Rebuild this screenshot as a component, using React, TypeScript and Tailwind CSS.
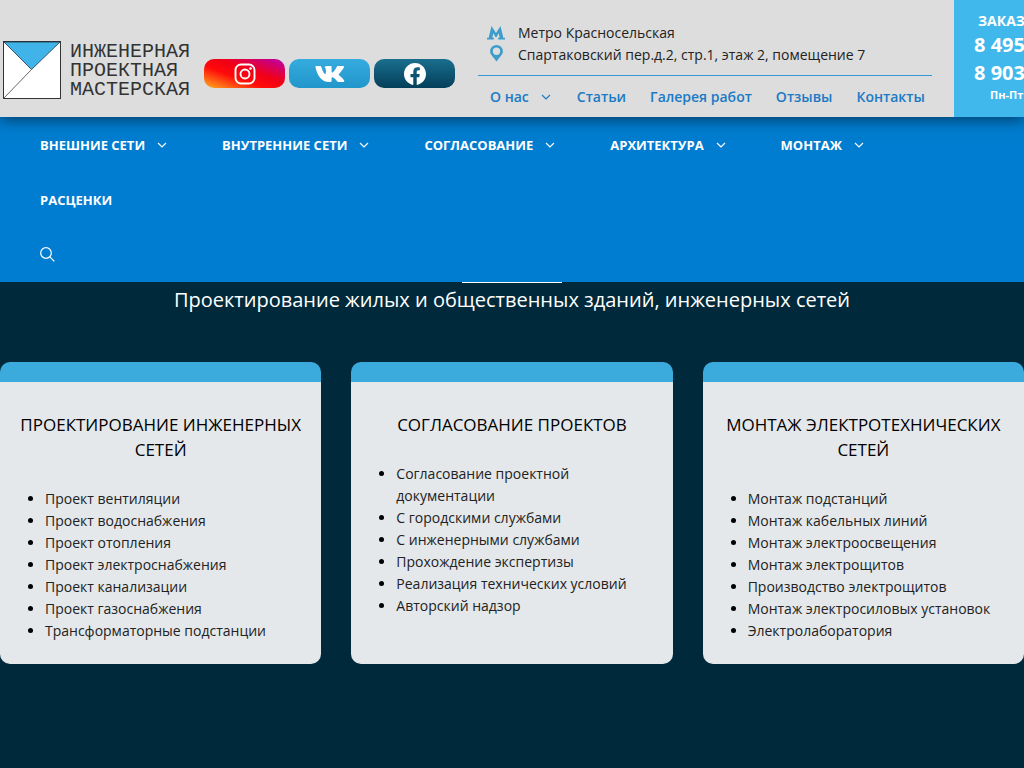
import type { ReactNode } from 'react';

const topLinks = ['Статьи', 'Галерея работ', 'Отзывы', 'Контакты'];

const mainLinks = [
  { label: 'ВНЕШНИЕ СЕТИ', sub: true },
  { label: 'ВНУТРЕННИЕ СЕТИ', sub: true },
  { label: 'СОГЛАСОВАНИЕ', sub: true },
  { label: 'АРХИТЕКТУРА', sub: true },
  { label: 'МОНТАЖ', sub: true },
  { label: 'РАСЦЕНКИ', sub: false },
];

const cards = [
  {
    title: 'ПРОЕКТИРОВАНИЕ ИНЖЕНЕРНЫХ СЕТЕЙ',
    items: [
      'Проект вентиляции',
      'Проект водоснабжения',
      'Проект отопления',
      'Проект электроснабжения',
      'Проект канализации',
      'Проект газоснабжения',
      'Трансформаторные подстанции',
    ],
  },
  {
    title: 'СОГЛАСОВАНИЕ ПРОЕКТОВ',
    items: [
      'Согласование проектной документации',
      'С городскими службами',
      'С инженерными службами',
      'Прохождение экспертизы',
      'Реализация технических условий',
      'Авторский надзор',
    ],
  },
  {
    title: 'МОНТАЖ ЭЛЕКТРОТЕХНИЧЕСКИХ СЕТЕЙ',
    items: [
      'Монтаж подстанций',
      'Монтаж кабельных линий',
      'Монтаж электроосвещения',
      'Монтаж электрощитов',
      'Производство электрощитов',
      'Монтаж электросиловых установок',
      'Электролаборатория',
    ],
  },
];

function Chevron() {
  return (
    <svg width="10" height="6" viewBox="0 0 10 6" fill="none" stroke="currentColor" strokeWidth="1.15" aria-hidden="true">
      <path d="M1 1l4 4 4-4" />
    </svg>
  );
}

function LogoMark() {
  return (
    <svg width="58" height="58" viewBox="0 0 58 58" aria-hidden="true" className="shrink-0">
      <rect x="0.5" y="0.5" width="57" height="57" fill="#fff" stroke="#333" />
      <path d="M1 1H57L28.500 28.500Z" fill="#40b4e8" stroke="#234" strokeWidth="0.8" />
      <path d="M0.500 57.500L28.500 28.500" stroke="#555" strokeWidth="0.9" />
    </svg>
  );
}

function InstagramIcon() {
  return (
    <svg width="22" height="22" viewBox="0 0 22 22" fill="none" stroke="#fff" strokeWidth="1.9" aria-hidden="true">
      <rect x="1.500" y="1.500" width="19" height="19" rx="5.500" />
      <circle cx="11" cy="11" r="4.500" />
      <circle cx="16.500" cy="5.500" r="1.300" fill="#fff" stroke="none" />
    </svg>
  );
}

function VkIcon() {
  return (
    <svg width="30" height="18" viewBox="0 0 30 18" fill="#fff" aria-hidden="true">
      <path d="M14.300 17C6.500 17 2.200 10.400 0.500 2.200C0.300 1.300 0.700 1 1.500 1H5C5.800 1 6.100 1.400 6.400 2.200C7.500 5.700 8.900 8.500 10 8.900C10.900 9.100 10.900 7.400 10.900 5.800C10.900 4 10.700 3.200 9.700 2.500C9.500 1.800 10.600 1 12 1H15.400C16.300 1 16.600 1.500 16.600 2.400V6.500C16.600 7.700 17.200 7.800 17.900 7.200C19.600 5.700 20.800 3.800 21.600 2.100C21.900 1.400 22.300 1 23.200 1H27.700C29 1 29.300 1.600 28.800 2.600C27.900 4.500 26 6.700 24 8.900C23.600 9.400 23.600 9.700 24.100 10.200C26 11.800 28 13.600 29 15.200C29.700 16.400 29 17 27.900 17H24C22.900 17 22.500 16.700 21.700 15.800C20.400 14.300 18.800 12.400 17.600 12.300C16.800 12.300 16.600 12.800 16.600 13.700V15.500C16.600 16.600 16.300 17 14.300 17Z" />
    </svg>
  );
}

function FacebookIcon() {
  return (
    <svg width="22" height="22" viewBox="0 0 24 24" fill="#fff" aria-hidden="true">
      <path d="M24 12.073c0-6.627-5.373-12-12-12s-12 5.373-12 12c0 5.990 4.388 10.954 10.125 11.854v-8.385H7.078v-3.470h3.047V9.430c0-3.007 1.792-4.669 4.533-4.669 1.312 0 2.686.235 2.686.235v2.953H15.830c-1.491 0-1.956.925-1.956 1.874v2.250h3.328l-.532 3.470h-2.796v8.385C19.612 23.027 24 18.062 24 12.073z" />
    </svg>
  );
}

function MetroIcon() {
  return (
    <svg width="18" height="14" viewBox="0 0 18 14" fill="#3c9ccc" aria-hidden="true">
      <path d="M4.500 0L9 7L13.500 0L16.300 11.800H18V13.500H11.200V11.800H12.600L11.800 7.200L9 11.800L6.200 7.200L5.400 11.800H6.800V13.500H0V11.800H1.700Z" />
    </svg>
  );
}

function PinIcon() {
  return (
    <svg width="13" height="20" viewBox="0 0 13 20" fill="#3c9ccc" fillRule="evenodd" aria-hidden="true">
      <path d="M6.500 0A6.400 6.400 0 0 1 12.900 6.400C12.900 9.500 9.500 12 6.500 16.500C3.500 12 0.100 9.500 0.100 6.400A6.400 6.400 0 0 1 6.500 0ZM6.500 2.500A3.700 3.700 0 1 0 6.500 9.900A3.700 3.700 0 0 0 6.500 2.500Z" />
    </svg>
  );
}

function ContactLine({ icon, children }: { icon: ReactNode; children: ReactNode }) {
  return (
    <p className="flex items-center gap-2">
      <span className="flex w-7 justify-center">{icon}</span>
      <span>{children}</span>
    </p>
  );
}

export default function App() {
  return (
    <div className="min-h-screen overflow-x-hidden bg-[#002a3c] font-['Open_Sans','Noto_Sans',sans-serif] text-sm leading-[22px]">
      <header className="relative z-10 flex bg-[#ddd] shadow-[0_3px_14px_rgba(0,0,0,0.5)]">
        <div className="flex shrink-0 items-start pl-[3px]">
          <a href="#home" className="flex items-start gap-[9px] pt-[41px]">
            <LogoMark />
            <span className="w-[122px] pt-px font-['Liberation_Mono',monospace] text-[20px] leading-[19px] text-[#333]">
              ИНЖЕНЕРНАЯ
              <br />
              ПРОЕКТНАЯ
              <br />
              МАСТЕРСКАЯ
            </span>
          </a>
          <div className="flex gap-1 pt-[59px] pl-3">
            <a href="#instagram" aria-label="Instagram" className="flex h-[29px] w-[81px] items-center justify-center rounded-[10px] bg-[linear-gradient(20deg,#ffb020_0%,#ff0a0a_38%,#f00018_60%,#b800b0_100%)]">
              <InstagramIcon />
            </a>
            <a href="#vk" aria-label="VK" className="flex h-[29px] w-[81px] items-center justify-center rounded-[10px] bg-linear-to-b from-[#35abde] to-[#2196cb]">
              <VkIcon />
            </a>
            <a href="#facebook" aria-label="Facebook" className="flex h-[29px] w-[81px] items-center justify-center rounded-[10px] bg-linear-to-b from-[#1a6f8e] to-[#043f5a]">
              <FacebookIcon />
            </a>
          </div>
        </div>
        <div className="ml-[23px] min-w-0 flex-1 pt-[22px]">
          <address className="pl-1 whitespace-nowrap text-[#222] not-italic">
            <ContactLine icon={<MetroIcon />}>Метро Красносельская</ContactLine>
            <ContactLine icon={<PinIcon />}>Спартаковский пер.д.2, стр.1, этаж 2, помещение 7</ContactLine>
          </address>
          <nav className="mt-[9px] flex h-[42px] items-center gap-6 border-t border-t-[#3498d8] px-3 font-semibold whitespace-nowrap text-[#1b7ac4]">
            <a href="#about" className="flex items-center gap-3 pr-0.5">
              О нас
              <Chevron />
            </a>
            {topLinks.map((l) => (
              <a key={l} href="#top">
                {l}
              </a>
            ))}
          </nav>
        </div>
        <div className="ml-[22px] w-[70px] shrink-0 overflow-hidden bg-[#40b8ec] pt-[11px] whitespace-nowrap text-white">
          <button type="button" className="block pl-6 font-bold leading-5">ЗАКАЗ</button>
          <a href="tel:8495" className="block pl-5 text-[20px] leading-7 font-bold">8 495</a>
          <a href="tel:8903" className="block pl-5 text-[20px] leading-7 font-bold">8 903</a>
          <p className="pl-9 text-[11px] leading-4 font-bold">Пн-Пт</p>
        </div>
      </header>

      <nav className="bg-[#007dd0] px-10 text-white">
        <ul className="flex flex-wrap gap-x-[55px] text-[13px] font-bold">
          {mainLinks.map(({ label, sub }) => (
            <li key={label}>
              <a href="#section" className="flex h-[55px] items-center gap-3">
                {label}
                {sub && <Chevron />}
              </a>
            </li>
          ))}
        </ul>
        <button type="button" aria-label="Поиск" className="flex h-[55px] items-center">
          <svg width="15" height="15" viewBox="0 0 15 15" fill="none" stroke="currentColor" strokeWidth="1.200" aria-hidden="true">
            <circle cx="6" cy="6" r="5.300" />
            <path d="M9.800 9.800L14.300 14.300" />
          </svg>
        </button>
      </nav>

      <main>
        <hr className="mx-auto w-[100px] border-t border-white" />
        <h1 className="mt-[3px] text-center text-xl leading-7 text-white">
          Проектирование жилых и общественных зданий, инженерных сетей
        </h1>
        <div className="mt-12 grid grid-cols-3 gap-[30px]">
          {cards.map((c) => (
            <section key={c.title} className="overflow-hidden rounded-[10px] border-t-20 border-[#3aabdc] bg-[#e4e8eb] px-4 pt-[30px] pb-[22px] text-black">
              <h2 className="text-center text-[17px] leading-[25px]">{c.title}</h2>
              <ul className="mt-[26px] list-disc pr-1 pl-[29px]">
                {c.items.map((i) => (
                  <li key={i} className="text-[#222] marker:text-black">{i}</li>
                ))}
              </ul>
            </section>
          ))}
        </div>
      </main>
    </div>
  );
}
